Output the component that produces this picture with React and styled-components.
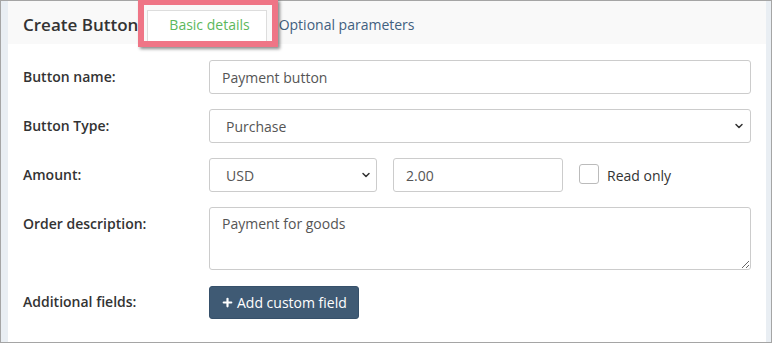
import React from 'react';
import styled, { createGlobalStyle } from 'styled-components';
import { ChevronDown, Plus } from 'lucide-react';

const Global = createGlobalStyle`
  html, body { margin: 0; padding: 0; background: #fff; }
  body { font-family: "Open Sans", "Liberation Sans", sans-serif; }
  * { box-sizing: border-box; }
`;

const Frame = styled.div`
  width: 772px;
  height: 343px;
  border: 1px solid #a5a5a5;
  background: #e9eef3;
  padding: 0 5px 0 7px;
  display: flex;
`;

const Panel = styled.div`
  flex: 1;
  background: #fff;
  display: flex;
  flex-direction: column;
  position: relative;
`;

const Heading = styled.div`
  height: 43px;
  background: #f9f9f9;
  display: flex;
  align-items: flex-end;
  padding-left: 15px;
`;

const Title = styled.h3`
  margin: 0 9px 0 0;
  align-self: center;
  padding-top: 3px;
  font-size: 17px;
  font-weight: 600;
  color: #333;
  line-height: 1;
`;

const Tab = styled.div`
  height: 34px;
  display: flex;
  align-items: center;
  padding-bottom: 7px;
  font-size: 14px;
  padding-left: ${p => (p.$active ? '21px' : '11px')};
  padding-right: ${p => (p.$active ? '16px' : '11px')};
  background: ${p => (p.$active ? '#fff' : 'transparent')};
  color: ${p => (p.$active ? '#5cb85c' : '#41607f')};
  border: 1px solid ${p => (p.$active ? '#ddd' : 'transparent')};
  border-bottom: none;
`;

const Highlight = styled.div`
  position: absolute;
  left: 130px;
  top: -2px;
  width: 140px;
  height: 48px;
  border: 6px solid #ef7586;
  box-shadow: 2px 2px 3px rgba(0, 0, 0, 0.45);
  pointer-events: none;
`;

const Body = styled.div`
  display: grid;
  grid-template-columns: 186px 1fr;
  row-gap: 15px;
  padding: 16px 15px 0 15px;
`;

const Label = styled.label`
  font-size: 14px;
  font-weight: 600;
  color: #333;
  line-height: 34px;
`;

const Field = styled.div`
  display: flex;
  align-items: center;
  gap: 16px;
`;

const Input = styled.input`
  height: 34px;
  width: ${p => p.$w || '100%'};
  border: 1px solid #ccc;
  border-radius: 3px;
  padding: 0 12px;
  font-family: inherit;
  font-size: 14px;
  color: #555;
  background: #fff;
  outline: none;
`;

const SelectWrap = styled.div`
  position: relative;
  width: ${p => p.$w || '100%'};
  height: 34px;
`;

const Select = styled.select`
  appearance: none;
  -webkit-appearance: none;
  width: 100%;
  height: 34px;
  border: 1px solid #ccc;
  border-radius: 3px;
  padding: 0 12px 0 16px;
  font-family: inherit;
  font-size: 14px;
  color: #555;
  background: #fff;
  outline: none;
`;

const Chevron = styled(ChevronDown)`
  position: absolute;
  right: ${p => p.$r}px;
  top: 11px;
  pointer-events: none;
`;

const Textarea = styled.textarea`
  height: 63px;
  width: 100%;
  border: 1px solid #ccc;
  border-radius: 3px;
  padding: 6px 12px;
  font-family: inherit;
  font-size: 14px;
  color: #555;
  resize: vertical;
  outline: none;
`;

const CheckLabel = styled.label`
  display: flex;
  align-items: center;
  gap: 8px;
  font-size: 14px;
  color: #333;
`;

const Box = styled.span`
  width: 20px;
  height: 20px;
  border: 1px solid #bbb;
  border-radius: 3px;
  background: #fff;
  margin-top: -2px;
`;

const Button = styled.button`
  height: 33px;
  margin-top: 1px;
  display: inline-flex;
  align-items: center;
  gap: 3px;
  padding: 0 11px;
  background: #3f5a74;
  color: #fff;
  border: 1px solid #36506a;
  border-radius: 3px;
  font-family: inherit;
  font-size: 14px;
  justify-self: start;
`;

export default function App() {
  return (
    <>
      <Global />
      <Frame>
        <Panel>
          <Heading>
            <Title>Create Button</Title>
            <Tab $active>Basic details</Tab>
            <Tab>Optional parameters</Tab>
          </Heading>
          <Highlight />
          <Body>
            <Label>Button name:</Label>
            <Input defaultValue="Payment button" />

            <Label>Button Type:</Label>
            <SelectWrap>
              <Select defaultValue="Purchase">
                <option>Purchase</option>
                <option>Donation</option>
              </Select>
              <Chevron $r={6} size={12} strokeWidth={3} color="#333" />
            </SelectWrap>

            <Label>Amount:</Label>
            <Field>
              <SelectWrap $w="168px">
                <Select defaultValue="USD">
                  <option>USD</option>
                  <option>EUR</option>
                </Select>
                <Chevron $r={5} size={12} strokeWidth={3} color="#333" />
              </SelectWrap>
              <Input $w="170px" defaultValue="2.00" />
              <CheckLabel>
                <Box />
                Read only
              </CheckLabel>
            </Field>

            <Label>Order description:</Label>
            <Textarea defaultValue="Payment for goods" />

            <Label>Additional fields:</Label>
            <Button>
              <Plus size={13} strokeWidth={4} />
              Add custom field
            </Button>
          </Body>
        </Panel>
      </Frame>
    </>
  );
}
